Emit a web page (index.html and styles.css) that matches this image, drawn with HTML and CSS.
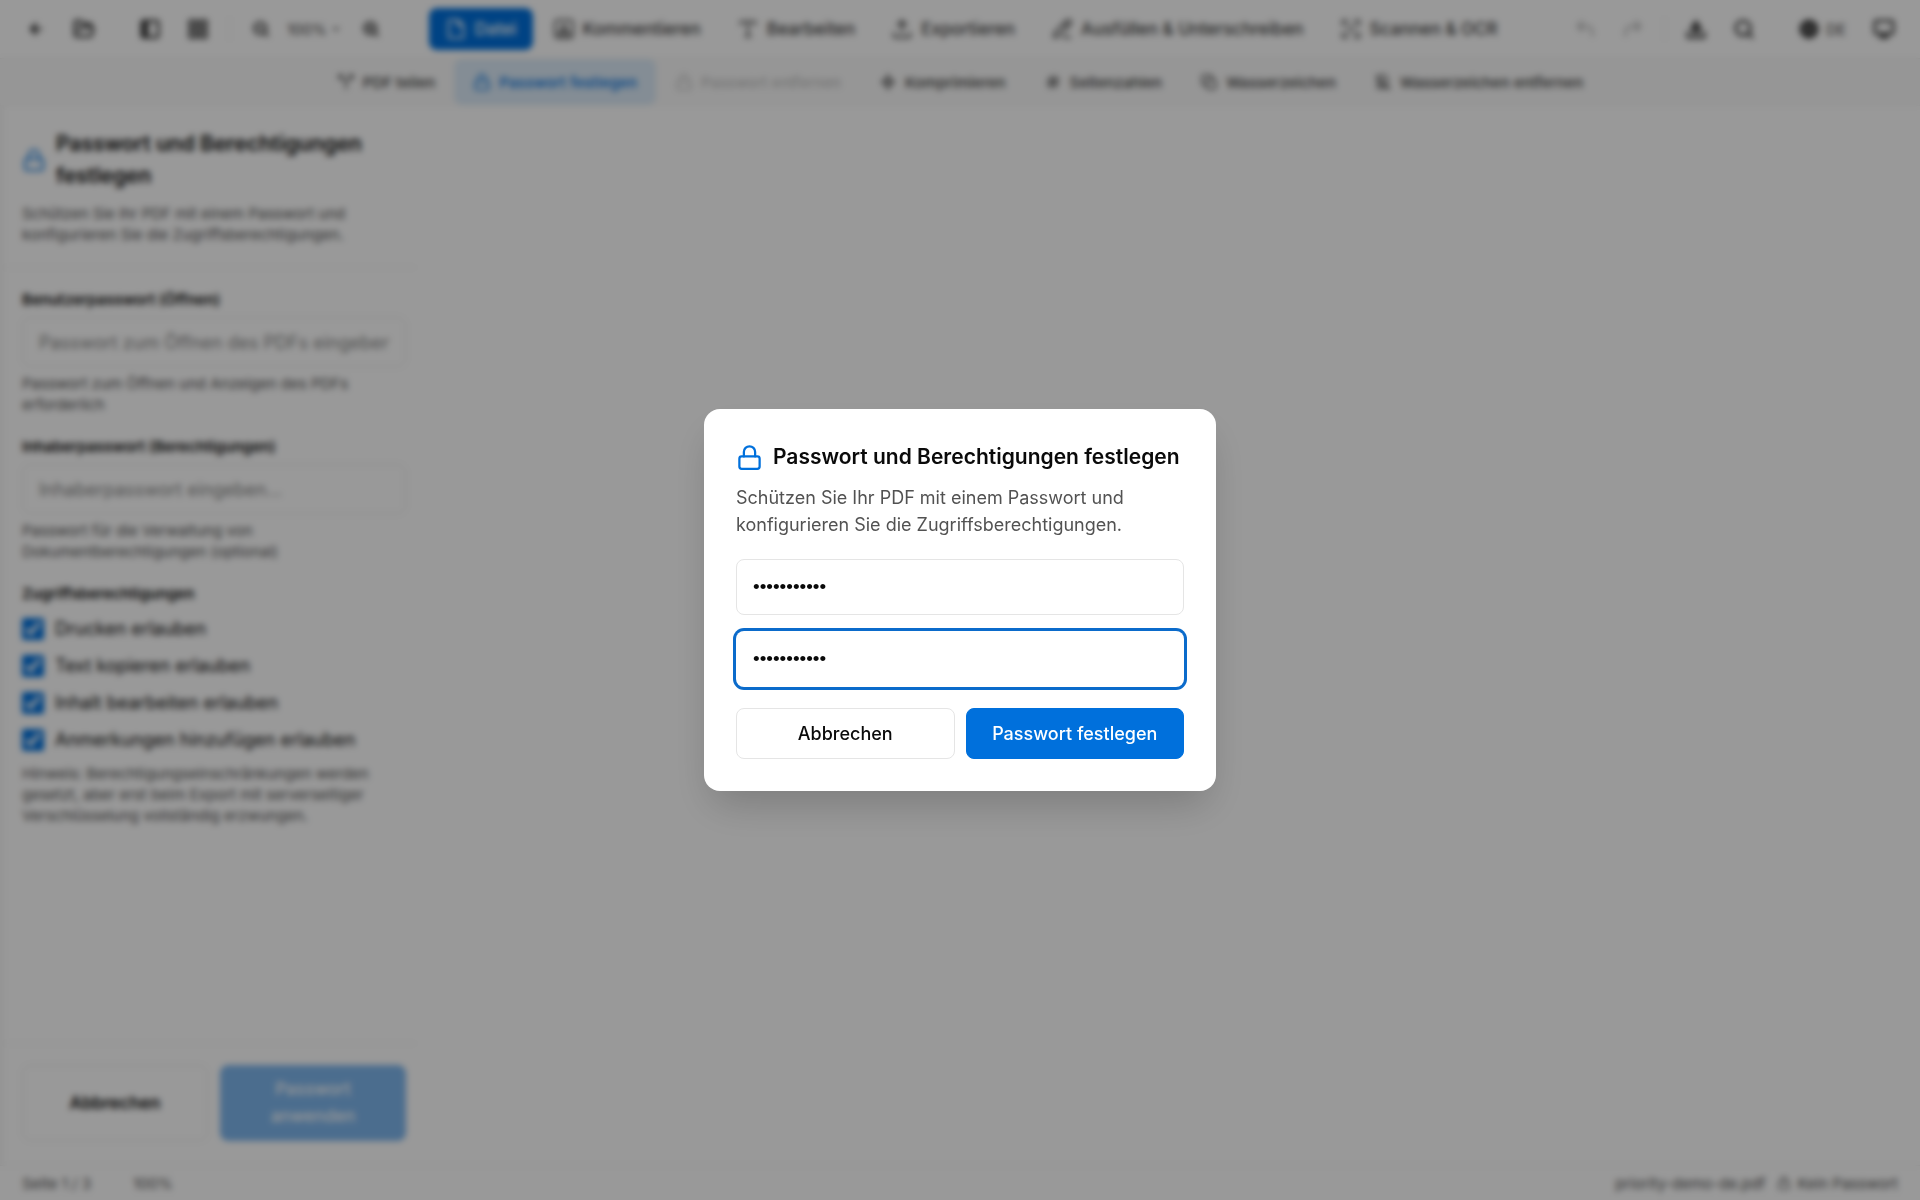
FILE: index.html
```html
<!DOCTYPE html>
<html lang="de">
<head>
    <meta charset="UTF-8">
    <meta name="viewport" content="width=device-width, initial-scale=1.0">
    <title>priority-demo-de.pdf</title>
    <link rel="stylesheet" href="styles.css">
</head>
<body>
    <!-- Shared icons -->
    <svg class="sprite" aria-hidden="true">
        <symbol id="lock" viewBox="0 0 24 24"><rect x="3" y="11" width="18" height="11" rx="2"/><path d="M7 11V7a5 5 0 0 1 10 0v4"/></symbol>
        <symbol id="back" viewBox="0 0 24 24"><path d="M19 12H5M12 5l-7 7 7 7M11 9v6"/></symbol>
        <symbol id="folder" viewBox="0 0 24 24"><path d="m6 14 1.500-3A2 2 0 0 1 9.300 10H20a2 2 0 0 1 2 2.500l-1.500 6a2 2 0 0 1-2 1.500H4a2 2 0 0 1-2-2V5a2 2 0 0 1 2-2h4a2 2 0 0 1 1.700 1l.8 1.200A2 2 0 0 0 12 6h6a2 2 0 0 1 2 2v2"/></symbol>
        <symbol id="panel" viewBox="0 0 24 24"><rect x="3" y="3" width="18" height="18" rx="2"/><path d="M9 3v18M6 5v14"/></symbol>
        <symbol id="grid" viewBox="0 0 24 24"><path d="M3 3h7v7H3zM14 3h7v7h-7zM3 14h7v7H3zM14 14h7v7h-7z"/></symbol>
        <symbol id="zoom-out" viewBox="0 0 24 24"><circle cx="11" cy="11" r="8"/><path d="m17 17 4 4M8 11h6"/></symbol>
        <symbol id="zoom-in" viewBox="0 0 24 24"><circle cx="11" cy="11" r="8"/><path d="m17 17 4 4M8 11h6M11 8v6"/></symbol>
        <symbol id="chevron" viewBox="0 0 24 24"><path d="m6 9 6 6 6-6"/></symbol>
        <symbol id="file" viewBox="0 0 24 24"><path d="M14 2H6a2 2 0 0 0-2 2v16a2 2 0 0 0 2 2h12a2 2 0 0 0 2-2V8ZM14 2v6h6"/></symbol>
        <symbol id="comment" viewBox="0 0 24 24"><rect x="2" y="2" width="20" height="20" rx="4"/><path d="m7 17 5-10 5 10M9 14h6M6 18h12"/></symbol>
        <symbol id="text" viewBox="0 0 24 24"><path d="M4 7V4h16v3M12 4v16M9 20h6"/></symbol>
        <symbol id="export" viewBox="0 0 24 24"><path d="M3 16v4a1 1 0 0 0 1 1h16a1 1 0 0 0 1-1v-4M12 16V3M7 8l5-5 5 5"/></symbol>
        <symbol id="sign" viewBox="0 0 24 24"><path d="m4 16-1 5 5-1L21 7a2.800 2.800 0 0 0-4-4ZM14 6l4 4M14 21h7"/></symbol>
        <symbol id="scan" viewBox="0 0 24 24"><path d="M3 8V3h5M16 3h5v5M21 16v5h-5M8 21H3v-5M8 8l2 2M16 8l-2 2M8 16l2-2M16 16l-2-2"/></symbol>
        <symbol id="undo" viewBox="0 0 24 24"><path d="M9 14 4 9l5-5M4 9h10a6 6 0 0 1 6 6v4"/></symbol>
        <symbol id="redo" viewBox="0 0 24 24"><path d="m15 14 5-5-5-5M20 9H10a6 6 0 0 0-6 6v4"/></symbol>
        <symbol id="save" viewBox="0 0 24 24"><path d="M3 16v5h18v-5M12 4v12M8 10l4-6 4 6M7 12l5 5 5-5M9 9h6"/></symbol>
        <symbol id="search" viewBox="0 0 24 24"><circle cx="11" cy="11" r="8"/><path d="m16 16 5 5"/></symbol>
        <symbol id="globe" viewBox="0 0 24 24"><circle cx="12" cy="12" r="9"/><path d="M3 12h18M4 8h16M4 16h16M12 3c-5 6-5 12 0 18 5-6 5-12 0-18Z"/></symbol>
        <symbol id="monitor" viewBox="0 0 24 24"><rect x="2" y="3" width="20" height="14" rx="2"/><path d="M8 21h8M10 17v4M14 17v4"/></symbol>
        <symbol id="split" viewBox="0 0 24 24"><path d="M16 3h5v5M8 3H3v5M21 3l-9 9v9M3 3l9 9"/></symbol>
        <symbol id="compress" viewBox="0 0 24 24"><path d="M12 2v7M9 6l3 3 3-3M12 22v-7M9 18l3-3 3 3M4 12h16M7 9l-3 3 3 3M17 9l3 3-3 3"/></symbol>
        <symbol id="hash" viewBox="0 0 24 24"><path d="M5 9h15M4 15h15M10 4 8 20M16 4l-2 16"/></symbol>
        <symbol id="watermark" viewBox="0 0 24 24"><path d="M16 8V5a2 2 0 0 0-2-2H5a2 2 0 0 0-2 2v9a2 2 0 0 0 2 2h3"/><rect x="9" y="9" width="12" height="12" rx="3"/></symbol>
        <symbol id="watermark-off" viewBox="0 0 24 24"><path d="M3 3l18 18M5 6v14h14M8 3h6l4 5v5M9 12v4h5"/></symbol>
    </svg>

    <div class="app">
        <header class="toolbar">
            <div class="tools">
                <button class="icon-button" aria-label="Zurück"><svg class="icon small"><use href="#back"/></svg></button>
                <button class="icon-button" aria-label="Öffnen"><svg class="icon"><use href="#folder"/></svg></button>
                <span class="spacer"></span>
                <button class="icon-button" aria-label="Seitenleiste"><svg class="icon"><use href="#panel"/></svg></button>
                <button class="icon-button" aria-label="Raster"><svg class="icon"><use href="#grid"/></svg></button>
                <span class="divider"></span>
                <button class="icon-button" aria-label="Verkleinern"><svg class="icon small"><use href="#zoom-out"/></svg></button>
                <button class="zoom-level">100% <svg class="icon"><use href="#chevron"/></svg></button>
                <button class="icon-button" aria-label="Vergrößern"><svg class="icon small"><use href="#zoom-in"/></svg></button>
            </div>
            <nav class="tabs">
                <button class="tab active"><svg class="icon"><use href="#file"/></svg>Datei</button>
                <button class="tab"><svg class="icon"><use href="#comment"/></svg>Kommentieren</button>
                <button class="tab"><svg class="icon"><use href="#text"/></svg>Bearbeiten</button>
                <button class="tab"><svg class="icon"><use href="#export"/></svg>Exportieren</button>
                <button class="tab"><svg class="icon"><use href="#sign"/></svg>Ausfüllen &amp; Unterschreiben</button>
                <button class="tab"><svg class="icon"><use href="#scan"/></svg>Scannen &amp; OCR</button>
            </nav>
            <div class="tools end">
                <button class="icon-button" aria-label="Rückgängig" disabled><svg class="icon"><use href="#undo"/></svg></button>
                <button class="icon-button" aria-label="Wiederholen" disabled><svg class="icon"><use href="#redo"/></svg></button>
                <span class="divider"></span>
                <button class="icon-button" aria-label="Speichern"><svg class="icon"><use href="#save"/></svg></button>
                <button class="icon-button" aria-label="Suchen"><svg class="icon"><use href="#search"/></svg></button>
                <button class="language"><svg class="icon"><use href="#globe"/></svg>DE</button>
                <button class="icon-button" aria-label="Design"><svg class="icon"><use href="#monitor"/></svg></button>
            </div>
        </header>

        <nav class="subtabs">
            <button class="subtab"><svg class="icon small"><use href="#split"/></svg>PDF teilen</button>
            <button class="subtab active"><svg class="icon small"><use href="#lock"/></svg>Passwort festlegen</button>
            <button class="subtab" disabled><svg class="icon small"><use href="#lock"/></svg>Passwort entfernen</button>
            <button class="subtab"><svg class="icon small"><use href="#compress"/></svg>Komprimieren</button>
            <button class="subtab"><svg class="icon small"><use href="#hash"/></svg>Seitenzahlen</button>
            <button class="subtab"><svg class="icon small"><use href="#watermark"/></svg>Wasserzeichen</button>
            <button class="subtab"><svg class="icon small"><use href="#watermark-off"/></svg>Wasserzeichen entfernen</button>
        </nav>

        <main class="workspace">
            <aside class="panel">
                <div class="panel-header">
                    <h2 class="title"><svg class="icon"><use href="#lock"/></svg>Passwort und Berechtigungen festlegen</h2>
                    <p class="note">Schützen Sie Ihr PDF mit einem Passwort und konfigurieren Sie die Zugriffsberechtigungen.</p>
                </div>
                <div class="panel-body">
                    <div class="field">
                        <label for="userPassword">Benutzerpasswort (Öffnen)</label>
                        <input class="text-input" type="password" id="userPassword" placeholder="Passwort zum Öffnen des PDFs eingeben...">
                        <p class="note">Passwort zum Öffnen und Anzeigen des PDFs erforderlich</p>
                    </div>
                    <div class="field">
                        <label for="ownerPassword">Inhaberpasswort (Berechtigungen)</label>
                        <input class="text-input" type="password" id="ownerPassword" placeholder="Inhaberpasswort eingeben...">
                        <p class="note">Passwort für die Verwaltung von Dokumentberechtigungen (optional)</p>
                    </div>
                    <div class="permissions">
                        <h3>Zugriffsberechtigungen</h3>
                        <label class="check"><input type="checkbox" checked>Drucken erlauben</label>
                        <label class="check"><input type="checkbox" checked>Text kopieren erlauben</label>
                        <label class="check"><input type="checkbox" checked>Inhalt bearbeiten erlauben</label>
                        <label class="check"><input type="checkbox" checked>Anmerkungen hinzufügen erlauben</label>
                        <p class="note">Hinweis: Berechtigungseinschränkungen werden gesetzt, aber erst beim Export mit serverseitiger Verschlüsselung vollständig erzwungen.</p>
                    </div>
                </div>
                <div class="panel-footer">
                    <button class="button strong">Abbrechen</button>
                    <button class="button primary" disabled>Passwort anwenden</button>
                </div>
            </aside>
        </main>

        <footer class="statusbar">
            <span>Seite 1 / 3</span>
            <span>100%</span>
            <span class="filename">priority-demo-de.pdf</span>
            <span class="protection"><svg class="icon tiny"><use href="#lock"/></svg>Kein Passwort</span>
        </footer>
    </div>

    <div class="overlay">
        <form class="modal" role="dialog" aria-labelledby="modalTitle">
            <h2 class="title" id="modalTitle"><svg class="icon"><use href="#lock"/></svg>Passwort und Berechtigungen festlegen</h2>
            <p class="description">Schützen Sie Ihr PDF mit einem Passwort und konfigurieren Sie die Zugriffsberechtigungen.</p>
            <div class="modal-fields">
                <input class="text-input" type="password" aria-label="Passwort" value="password123">
                <input class="text-input focused" type="password" aria-label="Passwort bestätigen" value="password123">
            </div>
            <div class="modal-actions">
                <button class="button" type="button">Abbrechen</button>
                <button class="button primary" type="button">Passwort festlegen</button>
            </div>
        </form>
    </div>
</body>
</html>
```
FILE: styles.css
```css
* {
    box-sizing: border-box;
}
body {
    margin: 0;
    font-family: Inter, "Liberation Sans", sans-serif;
    font-size: 18px;
    line-height: 27px;
    color: #0a0a0a;
    background-color: #fff;
}
h2, h3, p {
    margin: 0;
}
button, input {
    font: inherit;
    color: inherit;
}
button {
    border: none;
    background: none;
    cursor: pointer;
}
.sprite {
    display: none;
}
.icon {
    width: 22px;
    height: 22px;
    flex: none;
    fill: none;
    stroke: currentColor;
    stroke-width: 2;
    stroke-linecap: round;
    stroke-linejoin: round;
}
.icon.small {
    width: 18px;
    height: 18px;
}
.icon.tiny {
    width: 14px;
    height: 14px;
}
.app {
    display: flex;
    flex-direction: column;
    min-height: 100vh;
}

/* Top toolbar */
.toolbar {
    display: flex;
    align-items: center;
    height: 59px;
    padding: 0 18px;
    border-bottom: 1px solid #f0f0f0;
    color: #404040;
}
.tools {
    display: flex;
    align-items: center;
    gap: 12px;
}
.tools.end {
    margin-left: auto;
}
.icon-button {
    display: flex;
    align-items: center;
    justify-content: center;
    width: 36px;
    height: 36px;
    padding: 0;
}
.icon-button:disabled {
    opacity: 0.3;
}
.tools .icon {
    stroke-width: 3;
}
.spacer {
    width: 6px;
}
.divider {
    width: 1px;
    height: 24px;
    margin: 0 1px;
    background-color: #ebebeb;
}
.zoom-level {
    display: flex;
    align-items: center;
    gap: 4px;
    margin-left: -4px;
    padding: 0;
    font-size: 15px;
}
.zoom-level .icon {
    width: 10px;
    height: 10px;
}
.language {
    display: flex;
    align-items: center;
    gap: 6px;
    padding: 0 8px 0 24px;
    font-size: 15px;
}
.tabs {
    display: flex;
    gap: 4px;
    margin-left: 40px;
}
.tab {
    display: flex;
    align-items: center;
    gap: 8px;
    height: 42px;
    padding: 0 16px;
    border-radius: 8px;
    font-size: 17px;
    font-weight: 500;
    white-space: nowrap;
}
.tab.active {
    background-color: #0070dc;
    color: #fff;
}

/* Second toolbar */
.subtabs {
    display: flex;
    justify-content: center;
    height: 47px;
    border-bottom: 1px solid #f5f5f5;
    background-color: #fafafa;
    color: #404040;
}
.subtab {
    display: flex;
    align-items: center;
    gap: 8px;
    padding: 0 19px;
    border-radius: 8px;
    font-size: 15px;
    font-weight: 500;
    white-space: nowrap;
}
.subtab.active {
    background-color: #dcebf8;
    color: #0070dc;
}
.subtab:disabled {
    opacity: 0.3;
}

/* Side panel */
.workspace {
    display: flex;
    flex: 1;
}
.panel {
    display: flex;
    flex-direction: column;
    width: 416px;
    border-left: 4px solid #f7f7f7;
}
.panel-header {
    padding: 22px 18px;
    border-bottom: 1px solid #f0f0f0;
}
.title {
    display: flex;
    align-items: center;
    gap: 10px;
    font-size: 21px;
    font-weight: 600;
    line-height: 32px;
}
.title .icon {
    width: 24px;
    height: 24px;
    color: #0070dc;
}
.note {
    font-size: 15px;
    line-height: 21px;
    color: #525252;
}
.panel-header .note {
    margin-top: 11px;
}
.panel-body {
    display: flex;
    flex-direction: column;
    flex: 1;
    gap: 21px;
    padding: 21px 10px 20px 18px;
}
.field {
    display: flex;
    flex-direction: column;
    gap: 6px;
}
.field label, .permissions h3 {
    font-size: 15px;
    font-weight: 600;
    line-height: 22px;
}
.text-input {
    width: 100%;
    height: 50px;
    padding: 0 16px;
    border: 1px solid #e5e5e5;
    border-radius: 8px;
    background-color: #fff;
    outline: none;
}
.text-input::placeholder {
    color: #858585;
}
.permissions {
    display: flex;
    flex-direction: column;
    gap: 10px;
}
.check {
    display: flex;
    align-items: center;
    gap: 11px;
}
.check input {
    width: 22px;
    height: 22px;
    margin: 0;
    accent-color: #0070dc;
}
.panel-footer {
    display: grid;
    grid-template-columns: 1fr 1fr;
    gap: 12px;
    padding: 21px 10px 24px 18px;
    border-top: 1px solid #f0f0f0;
}
.button {
    padding: 11px 16px;
    border: 1px solid #e5e5e5;
    border-radius: 8px;
    background-color: #fff;
    font-weight: 500;
}
.button.strong {
    font-weight: 600;
}
.panel .button {
    padding: 10px 16px;
    font-size: 17px;
}
.button.primary {
    border-color: #0070dc;
    background-color: #0070dc;
    color: #fff;
}
.button.primary:disabled {
    opacity: 0.5;
}

/* Status bar */
.statusbar {
    display: flex;
    align-items: center;
    height: 35px;
    padding: 0 22px;
    border-top: 1px solid #f0f0f0;
    gap: 42px;
    font-size: 15px;
    color: #525252;
}
.filename {
    margin-left: auto;
}
.protection {
    display: flex;
    align-items: center;
    gap: 6px;
    margin-left: -30px;
}

/* Password dialog */
.overlay {
    position: fixed;
    inset: 0;
    display: flex;
    align-items: center;
    justify-content: center;
    background-color: rgba(0, 0, 0, 0.4);
    backdrop-filter: blur(3px);
}
.modal {
    width: 512px;
    padding: 32px;
    border-radius: 16px;
    background-color: #fff;
    box-shadow: 0 20px 40px -8px rgba(0, 0, 0, 0.2);
}
.modal .title {
    white-space: nowrap;
}
.modal .icon {
    width: 27px;
    height: 27px;
}
.description {
    margin-top: 11px;
    color: #525252;
}
.modal-fields {
    display: flex;
    flex-direction: column;
    gap: 16px;
    margin: 21px 0;
}
.modal .text-input {
    height: 56px;
    font-family: "Liberation Sans", sans-serif;
    font-size: 19px;
}
.text-input.focused {
    border-color: transparent;
    box-shadow: 0 0 0 3px #0b6bcb;
}
.modal-actions {
    display: grid;
    grid-template-columns: 1fr 1fr;
    gap: 11px;
}
```
